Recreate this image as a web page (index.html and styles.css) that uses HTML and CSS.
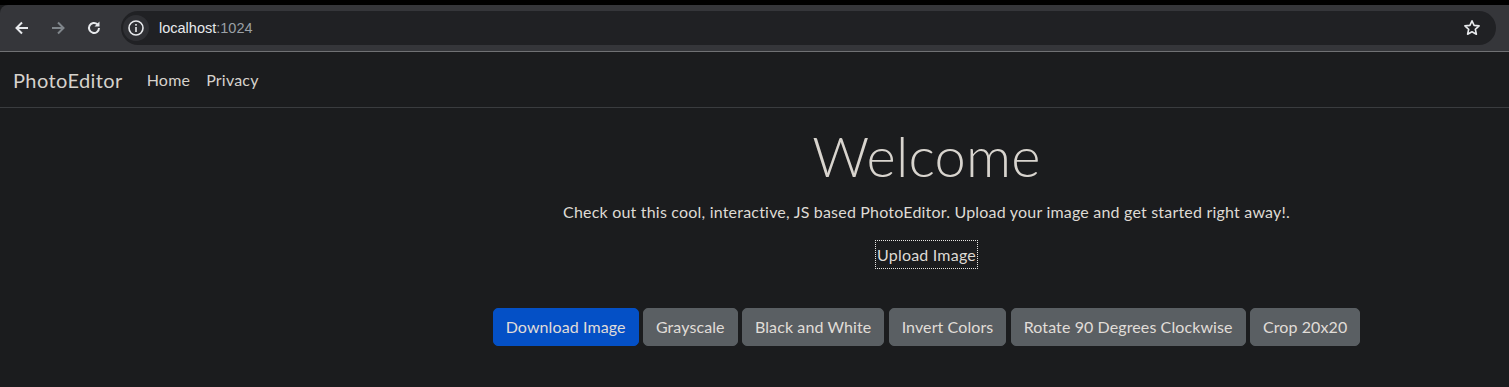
FILE: index.html
```html
<!DOCTYPE html>
<html lang="en">
<head>
    <meta charset="UTF-8">
    <title>PhotoEditor</title>
    <link rel="stylesheet" href="styles.css">
</head>
<body>
<div class="frame-top"></div>
<div class="toolbar">
    <div class="nav-icons">
        <svg class="ico" width="20" height="20" viewBox="0 0 20 20"><path d="M16 10H5M10 4.5L4.5 10 10 15.5" fill="none" stroke="#e8eaed" stroke-width="2"/></svg>
        <svg class="ico" width="20" height="20" viewBox="0 0 20 20"><path d="M4 10h11M10 4.5l5.5 5.5-5.5 5.5" fill="none" stroke="#80868b" stroke-width="2"/></svg>
        <svg class="ico" width="20" height="20" viewBox="0 0 20 20"><path d="M15 10a5 5 0 1 1-1.6-3.7" fill="none" stroke="#e8eaed" stroke-width="2"/><path d="M15.5 3.5v5h-5z" fill="#e8eaed"/></svg>
    </div>
    <div class="omnibox">
        <span class="info">
            <svg width="18" height="18" viewBox="0 0 18 18"><circle cx="9" cy="9" r="7" fill="none" stroke="#e8eaed" stroke-width="1.6"/><rect x="8.2" y="8" width="1.6" height="5" fill="#e8eaed"/><rect x="8.2" y="5" width="1.6" height="1.7" fill="#e8eaed"/></svg>
        </span>
        <span class="url">localhost<span class="port">:1024</span></span>
        <svg class="star" width="20" height="20" viewBox="0 0 20 20"><path d="M10 2.8l2.1 4.6 5 .5-3.8 3.4 1.1 4.9L10 13.7l-4.4 2.5 1.1-4.9L2.9 7.9l5-.5z" fill="none" stroke="#e8eaed" stroke-width="1.6" stroke-linejoin="round"/></svg>
    </div>
</div>

<nav class="navbar">
    <a class="brand" href="#">PhotoEditor</a>
    <a class="nav-link" href="#">Home</a>
    <a class="nav-link" href="#">Privacy</a>
</nav>

<div class="main">
    <h1 class="display">Welcome</h1>
    <p class="lead">Check out this cool, interactive, JS based PhotoEditor. Upload your image and get started right away!.</p>
    <label class="upload">Upload Image</label>
    <div class="actions">
        <button class="btn btn-primary">Download Image</button>
        <button class="btn">Grayscale</button>
        <button class="btn">Black and White</button>
        <button class="btn">Invert Colors</button>
        <button class="btn">Rotate 90 Degrees Clockwise</button>
        <button class="btn">Crop 20x20</button>
    </div>
</div>
</body>
</html>
```

FILE: styles.css
```css
*{
    margin: 0;
    padding: 0;
    box-sizing: border-box;
}
body{
    background: #1b1c1e;
    font-family: Lato, "Liberation Sans", sans-serif;
    color: #dedad4;
    font-size: 16px;
    letter-spacing: 0.2px;
}
.frame-top{
    height: 5px;
    background: #000;
}
.toolbar{
    height: 47px;
    background: #35363a;
    border-top-left-radius: 8px;
    border-bottom: 1px solid #707174;
    display: flex;
    align-items: center;
    padding-left: 12px;
    padding-right: 13px;
    font-family: "Liberation Sans", sans-serif;
    letter-spacing: 0;
}
.nav-icons{
    display: flex;
    gap: 16px;
    margin-right: 17px;
}
.nav-icons .ico{
    display: block;
}
.omnibox{
    flex: 1;
    height: 34px;
    background: #202124;
    border-radius: 17px;
    display: flex;
    align-items: center;
    padding: 0 14px 0 2px;
}
.info{
    width: 26px;
    height: 26px;
    border-radius: 50%;
    background: #2f3034;
    display: flex;
    align-items: center;
    justify-content: center;
    margin-right: 10px;
}
.url{
    flex: 1;
    color: #e8eaed;
    font-size: 14.5px;
}
.url .port{
    color: #9aa0a6;
}
.navbar{
    height: 56px;
    border-bottom: 1px solid #3a3c3f;
    display: flex;
    align-items: center;
    padding-left: 13px;
}
.navbar a{
    text-decoration: none;
    color: #d6d2cc;
}
.brand{
    font-size: 20px;
    letter-spacing: 0.4px;
    margin-right: 24px;
}
.nav-link{
    margin-right: 16px;
    color: #c9c5bf;
}
.main{
    margin-left: 344px;
    text-align: center;
}
.display{
    font-size: 56px;
    font-weight: 300;
    line-height: 1.2;
    margin-top: 14px;
    color: #d8d4ce;
}
.lead{
    margin-top: 11px;
    line-height: 24px;
}
.upload{
    display: inline-block;
    margin-top: 17px;
    padding: 0 1px;
    line-height: 27px;
    outline: 1px dotted #e8e6e3;
}
.actions{
    margin-top: 40px;
}
.btn{
    font-family: inherit;
    font-size: 16px;
    letter-spacing: 0.1px;
    color: #e0ddd8;
    background: #5a5f63;
    border: 1px solid #5a5f63;
    border-radius: 5px;
    padding: 6px 12px;
    line-height: 24px;
    cursor: pointer;
}
.btn-primary{
    background: #0450c6;
    border-color: #0450c6;
}
```
